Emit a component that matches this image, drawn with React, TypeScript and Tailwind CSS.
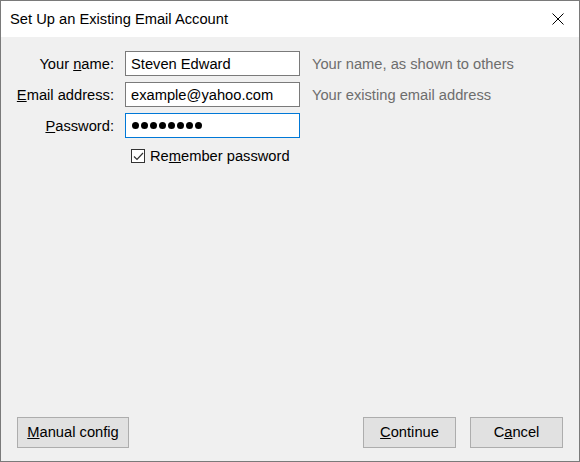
import { useState } from "react"

const font = { fontFamily: '"Liberation Sans", Arial, sans-serif' }

export default function App() {
    const [name, setName] = useState("Steven Edward")
    const [email, setEmail] = useState("example@yahoo.com")
    const [remember, setRemember] = useState(true)

    return (
        <div
            className="w-[580px] h-[462px] flex flex-col border border-[#7a7a7a] bg-[#f0f0f0] text-[14.7px] text-black"
            style={font}
        >
            {/* title bar */}
            <div className="h-[36px] bg-white flex items-center justify-between pl-[9px] pr-[14px]">
                <span className="leading-none pt-px">Set Up an Existing Email Account</span>
                <button className="w-[14px] h-[14px] flex items-center justify-center">
                    <XIcon className="w-[12px] h-[12px]" />
                </button>
            </div>

            {/* form */}
            <div className="flex-1 flex flex-col pt-[14px]">
                <div className="grid grid-cols-[113px_175px_auto] gap-x-[11px] gap-y-[6px] items-center">
                    <label className="text-right pt-px" htmlFor="name">
                        Your <u>n</u>ame:
                    </label>
                    <input
                        id="name"
                        value={name}
                        onChange={(e) => setName(e.target.value)}
                        className="h-[25px] border border-[#7a7a7a] bg-white px-[5px] outline-none"
                    />
                    <span className="pl-px text-[#6d6d6d] pt-px">Your name, as shown to others</span>

                    <label className="text-right pt-px" htmlFor="email">
                        <u>E</u>mail address:
                    </label>
                    <input
                        id="email"
                        value={email}
                        onChange={(e) => setEmail(e.target.value)}
                        className="h-[25px] border border-[#7a7a7a] bg-white px-[5px] outline-none"
                    />
                    <span className="pl-px text-[#6d6d6d] pt-px">Your existing email address</span>

                    <label className="text-right pt-px" htmlFor="password">
                        <u>P</u>assword:
                    </label>
                    <div
                        id="password"
                        className="h-[25px] border border-[#0078d7] bg-white pl-[6px] flex items-center gap-[2px]"
                    >
                        {Array.from({ length: 8 }).map((_, i) => (
                            <span key={i} className="w-[7px] h-[7px] rounded-full bg-black" />
                        ))}
                    </div>
                    <span />
                </div>

                <label className="mt-[7px] ml-[130px] flex items-center gap-[5px] cursor-default">
                    <span
                        onClick={() => setRemember(!remember)}
                        className="w-[14px] h-[14px] border border-[#333] bg-white flex items-center justify-center"
                    >
                        {remember && <CheckIcon className="w-[11px] h-[11px] text-[#333]" />}
                    </span>
                    <span>
                        Re<u>m</u>ember password
                    </span>
                </label>

                {/* buttons */}
                <div className="mt-auto mb-[13px] flex items-center pl-[16px] pr-[16px]">
                    <button className="w-[112px] h-[31px] border border-[#adadad] bg-[#e1e1e1]">
                        <u>M</u>anual config
                    </button>
                    <div className="flex-1" />
                    <button className="w-[93px] h-[31px] border border-[#adadad] bg-[#e1e1e1]">
                        <u>C</u>ontinue
                    </button>
                    <button className="ml-[14px] w-[93px] h-[31px] border border-[#adadad] bg-[#e1e1e1]">
                        C<u>a</u>ncel
                    </button>
                </div>
            </div>
        </div>
    )
}

function XIcon(props: any) {
    return (
        <svg {...props} viewBox="0 0 12 12" fill="none" stroke="currentColor" strokeWidth="1">
            <path d="M0.5 0.5 L11.5 11.5" />
            <path d="M11.5 0.5 L0.5 11.5" />
        </svg>
    )
}

function CheckIcon(props: any) {
    return (
        <svg {...props} viewBox="0 0 11 11" fill="none" stroke="currentColor" strokeWidth="1.2">
            <path d="M1 5.5 L4 8.5 L10 2" />
        </svg>
    )
}
